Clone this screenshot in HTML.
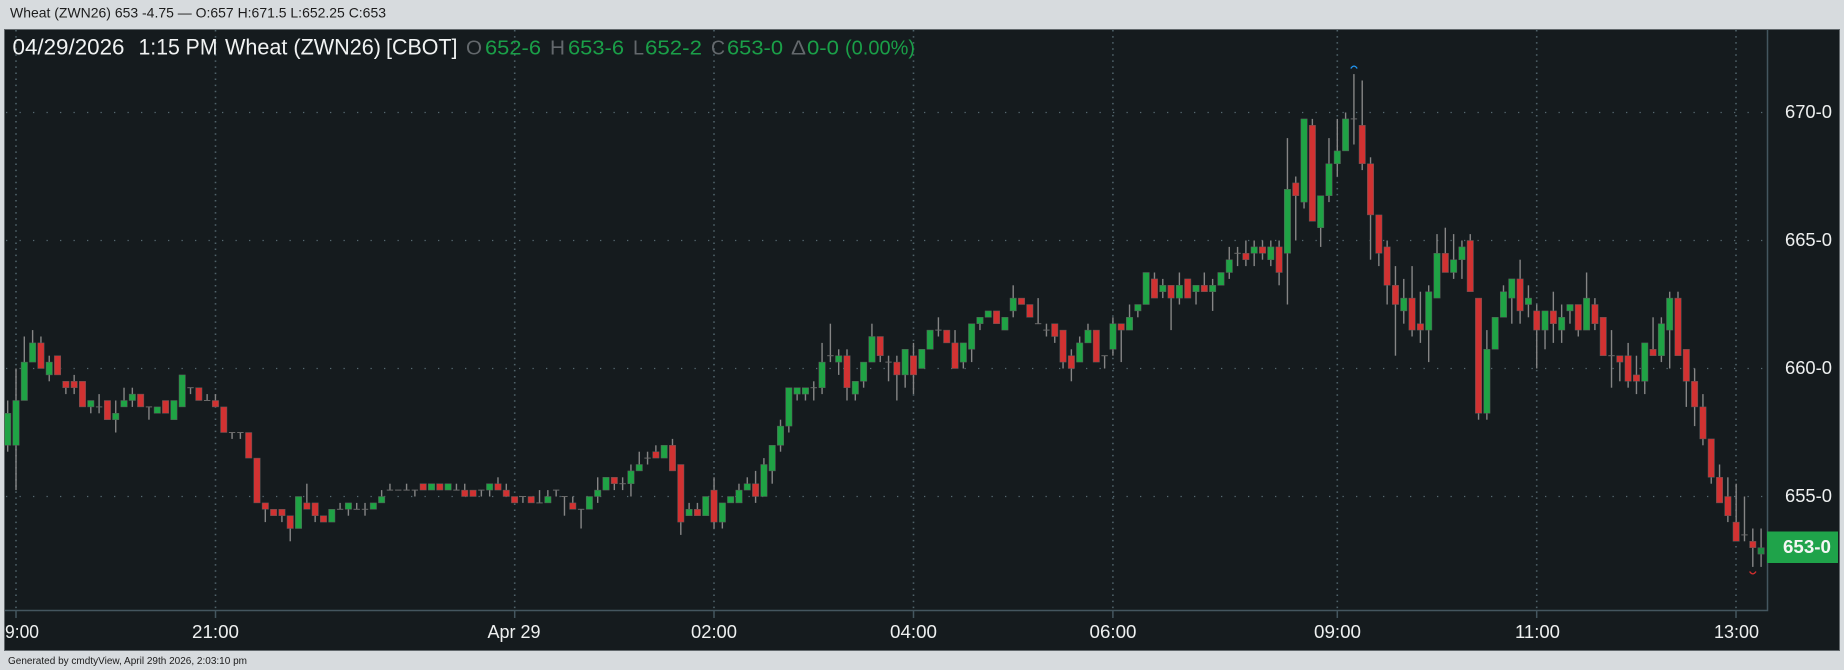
<!DOCTYPE html>
<html lang="en">
<head>
<meta charset="utf-8">
<title>Wheat (ZWN26)</title>
<style>
html,body{margin:0;padding:0;background:#d7dbde;width:1844px;height:670px;overflow:hidden}
svg{display:block}
text{font-family:"Liberation Sans",Arial,sans-serif}
.w{fill:#f1f3f3;font-size:22px}
.g{fill:#1a9f48;font-size:20.5px}
.k{fill:#63686c;font-size:20.5px}
.a{fill:#eef0f0;font-size:18px}
</style>
</head>
<body>
<svg id="c" xmlns="http://www.w3.org/2000/svg" width="1844" height="670" viewBox="0 0 1844 670">
<rect width="1844" height="670" fill="#d7dbde"/>
<text x="10" y="17.5" font-size="14" fill="#1c1c1c" textLength="376" lengthAdjust="spacingAndGlyphs">Wheat (ZWN26) 653 -4.75 — O:657 H:671.5 L:652.25 C:653</text>
<rect x="4.5" y="29.5" width="1835" height="621" fill="#151b1e" stroke="#62686c" stroke-width="1"/>
<g stroke="#566870" stroke-width="1.2" stroke-dasharray="1.3 12.2">
<line x1="6" x2="1763" y1="112.5" y2="112.5"/>
<line x1="6" x2="1763" y1="240.5" y2="240.5"/>
<line x1="6" x2="1763" y1="368.5" y2="368.5"/>
<line x1="6" x2="1763" y1="496.5" y2="496.5"/>
</g>
<g stroke="#4f6269" stroke-width="1.6" stroke-dasharray="1.5 4.57">
<line x1="16" x2="16" y1="30" y2="610"/>
<line x1="215.5" x2="215.5" y1="30" y2="610"/>
<line x1="514.7" x2="514.7" y1="30" y2="610"/>
<line x1="714" x2="714" y1="30" y2="610"/>
<line x1="913.5" x2="913.5" y1="30" y2="610"/>
<line x1="1112.9" x2="1112.9" y1="30" y2="610"/>
<line x1="1337.3" x2="1337.3" y1="30" y2="610"/>
<line x1="1536.7" x2="1536.7" y1="30" y2="610"/>
<line x1="1736" x2="1736" y1="30" y2="610"/>
</g>
<g id="candles"></g>
<g stroke="#44565f" stroke-width="1.5" fill="none">
<path d="M5 610.5H1767.5V30"/>
<path d="M16 611V618M215.5 611V618M514.7 611V618M714 611V618M913.5 611V618M1112.9 611V618M1337.3 611V618M1536.7 611V618M1736 611V618"/>
</g>
<path d="M1350.8 68.5Q1354 63.8 1357.2 68.5" fill="none" stroke="#2196f3" stroke-width="1.3"/>
<path d="M1749.6 571.5Q1752.8 576.2 1756 571.5" fill="none" stroke="#d32f2f" stroke-width="1.3"/>

<text class="w" x="12.5" y="54.5" textLength="112" lengthAdjust="spacingAndGlyphs">04/29/2026</text>
<text class="w" x="138.5" y="54.5" textLength="79" lengthAdjust="spacingAndGlyphs">1:15 PM</text>
<text class="w" x="225" y="54.5" textLength="156" lengthAdjust="spacingAndGlyphs">Wheat (ZWN26)</text>
<text class="w" x="386" y="54.5" textLength="71.5" lengthAdjust="spacingAndGlyphs">[CBOT]</text>
<text class="k" x="466" y="54.5" textLength="16" lengthAdjust="spacingAndGlyphs">O</text>
<text class="g" x="485" y="54.5" textLength="56" lengthAdjust="spacingAndGlyphs">652-6</text>
<text class="k" x="550" y="54.5" textLength="15" lengthAdjust="spacingAndGlyphs">H</text>
<text class="g" x="568" y="54.5" textLength="56" lengthAdjust="spacingAndGlyphs">653-6</text>
<text class="k" x="633" y="54.5" textLength="11" lengthAdjust="spacingAndGlyphs">L</text>
<text class="g" x="645" y="54.5" textLength="57" lengthAdjust="spacingAndGlyphs">652-2</text>
<text class="k" x="711" y="54.5" textLength="14" lengthAdjust="spacingAndGlyphs">C</text>
<text class="g" x="727" y="54.5" textLength="56" lengthAdjust="spacingAndGlyphs">653-0</text>
<text class="k" x="791" y="54.5" textLength="15" lengthAdjust="spacingAndGlyphs">Δ</text>
<text class="g" x="807" y="54.5" textLength="32" lengthAdjust="spacingAndGlyphs">0-0</text>
<text class="g" x="845" y="54.5" textLength="70" lengthAdjust="spacingAndGlyphs">(0.00%)</text>

<text class="a" x="1785" y="118" textLength="47" lengthAdjust="spacingAndGlyphs">670-0</text>
<text class="a" x="1785" y="246" textLength="47" lengthAdjust="spacingAndGlyphs">665-0</text>
<text class="a" x="1785" y="374" textLength="47" lengthAdjust="spacingAndGlyphs">660-0</text>
<text class="a" x="1785" y="502" textLength="47" lengthAdjust="spacingAndGlyphs">655-0</text>
<rect x="1767" y="531.5" width="71" height="31.5" fill="#1fa34a"/>
<text x="1783" y="553" font-size="18" font-weight="700" fill="#f4f6f4" textLength="48" lengthAdjust="spacingAndGlyphs">653-0</text>

<text class="a" x="5" y="638" textLength="34" lengthAdjust="spacingAndGlyphs">9:00</text>
<text class="a" x="192" y="638" textLength="47" lengthAdjust="spacingAndGlyphs">21:00</text>
<text class="a" x="487.5" y="638" textLength="53" lengthAdjust="spacingAndGlyphs">Apr 29</text>
<text class="a" x="691" y="638" textLength="46" lengthAdjust="spacingAndGlyphs">02:00</text>
<text class="a" x="890" y="638" textLength="47" lengthAdjust="spacingAndGlyphs">04:00</text>
<text class="a" x="1089.5" y="638" textLength="47" lengthAdjust="spacingAndGlyphs">06:00</text>
<text class="a" x="1314" y="638" textLength="47" lengthAdjust="spacingAndGlyphs">09:00</text>
<text class="a" x="1515" y="638" textLength="45" lengthAdjust="spacingAndGlyphs">11:00</text>
<text class="a" x="1714" y="638" textLength="45" lengthAdjust="spacingAndGlyphs">13:00</text>

<text x="8" y="664" font-size="10" fill="#1c1c1c" textLength="239" lengthAdjust="spacingAndGlyphs">Generated by cmdtyView, April 29th 2026, 2:03:10 pm</text>
</svg>
<script>
var D="g47,52,45,53 g45,52,40,59 g39,45,35,45 g36,39,34,39 r36,40,35,40 g39,41,38,42 r38,41,38,41 r42,43,42,44 r42,43,41,44 r42,46,42,46 g45,46,45,47 d46,46,44,47 r45,48,45,48 g47,48,45,50 g45,46,43,46 g44,45,43,46 r44,46,44,46 d46,46,46,48 g46,47,46,47 r45,47,45,47 g45,48,45,48 g41,46,41,46 d43,43,43,44 r43,45,43,45 d45,45,44,45 r45,46,44,46 r46,50,46,50 d50,50,50,51 d50,50,50,51 r50,54,50,54 r54,61,54,61 r61,62,61,64 r62,63,62,63 r62,63,62,64 r63,65,63,67 g60,65,60,65 r61,62,58,62 r61,63,61,64 r63,64,63,64 g62,64,62,64 d62,62,61,62 g61,62,61,63 d62,62,61,62 d62,62,61,63 g61,62,61,62 g60,61,59,61 d59,59,58,59 d59,59,59,59 d59,59,58,59 d59,59,59,60 r58,59,58,59 g58,59,58,59 r58,59,58,59 g58,59,58,59 d59,59,58,59 r59,60,58,60 r59,60,59,60 d59,59,59,60 g58,59,58,60 r58,59,57,59 r59,60,58,60 r60,61,60,61 d60,60,60,61 r60,61,60,61 d61,61,59,61 g60,61,59,61 d59,59,59,60 d60,60,60,63 r61,62,60,62 d62,62,62,65 g60,62,60,62 g59,60,57,61 g57,59,57,59 r57,58,57,59 d58,58,57,59 g56,58,55,60 g55,56,53,56 d54,54,53,55 r53,54,52,54 g52,54,52,54 r52,56,51,56 r55,64,55,66 g62,63,61,63 r62,63,61,63 g60,63,60,63 r59,64,57,65 g61,64,61,65 g60,61,60,61 g59,61,58,61 g58,59,57,59 r58,60,56,61 g55,60,54,60 g52,56,52,58 g49,52,48,53 g43,49,43,50 g43,44,43,45 g43,44,43,45 d43,43,42,45 g39,43,36,44 d38,38,33,39 g38,39,37,41 r38,43,37,45 g42,44,42,45 g39,42,39,43 g35,39,33,39 r35,38,35,39 d39,39,38,42 r39,41,38,45 g37,41,37,43 r38,41,36,44 g37,40,37,40 g34,37,34,37 d34,34,32,35 r34,36,34,36 r36,40,34,40 g36,39,36,40 g33,37,33,39 g32,33,32,34 g31,32,31,32 r31,33,31,33 g32,34,32,34 g29,31,27,32 r29,30,29,30 r30,32,30,32 d33,33,29,33 d34,34,33,35 r33,35,33,36 r34,39,34,40 r38,40,37,42 g36,39,35,39 g34,36,33,36 r34,39,34,39 d38,38,38,40 g33,37,32,38 r33,34,33,39 g32,34,30,34 g30,31,30,32 g25,30,25,30 r26,29,25,29 g27,28,26,29 r27,29,27,34 g27,29,25,30 r26,29,26,29 g27,28,27,30 r27,28,25,28 g27,28,26,31 g25,27,25,27 g23,25,21,26 d22,22,21,24 r22,23,20,24 g21,22,20,24 r21,22,20,23 g21,23,20,24 r21,25,20,27 g12,22,4,30 r11,13,10,20 g1,14,1,15 r2,17,1,17 g13,18,13,21 g8,13,4,14 g6,8,1,10 g1,6,0,6 d1,1,-6,5 r2,8,-5,9 r8,16,7,23 r16,22,16,24 r21,27,20,30 r27,30,24,38 g29,31,26,33 r29,34,24,35 r33,34,28,36 g28,34,27,39 g22,29,19,29 r22,25,18,25 g23,25,19,26 g21,23,20,26 r20,28,19,28 r29,47,29,48 g37,47,34,48 g32,37,32,37 g28,32,27,32 g26,29,26,33 r26,31,23,33 g29,30,27,32 r31,34,30,40 g31,34,31,37 r31,33,28,36 g32,34,30,36 g30,31,30,33 r30,34,30,35 g29,34,25,34 r30,33,29,34 r32,38,32,38 d38,38,34,43 r38,39,38,42 r38,42,36,43 r41,42,38,44 g36,42,36,44 r37,38,32,38 g33,38,32,39 g29,34,28,40 r29,38,28,38 r37,42,37,46 r42,46,40,49 r46,51,44,52 r51,57,51,58 r57,61,55,61 r60,63,57,64 r64,67,58,67 d66,66,60,67 r67,68,65,71 n68,69,65,71".split(" ");
var s="";
function Y(t){return (112.5+6.4*t).toFixed(1)}
D.forEach(function(v,i){
  var k=v.charAt(0),p=v.slice(1).split(",").map(Number),x=7.69+8.31*i;
  var X=x.toFixed(2);
  if(p[2]<p[0]) s+='<line x1="'+X+'" x2="'+X+'" y1="'+Y(p[2])+'" y2="'+Y(p[0])+'" stroke="#858585" stroke-width="1.4"/>';
  if(p[3]>p[1]) s+='<line x1="'+X+'" x2="'+X+'" y1="'+Y(p[1])+'" y2="'+Y(p[3])+'" stroke="#858585" stroke-width="1.4"/>';
  if(k==="d"){
    s+='<line x1="'+(x-3.2).toFixed(2)+'" x2="'+(x+3.2).toFixed(2)+'" y1="'+Y(p[0])+'" y2="'+Y(p[0])+'" stroke="#6a6a6a" stroke-width="1"/>';
  }else{
    var f=k==="g"?"#1fa345":k==="r"?"#d13232":"#1e8a40";
    s+='<rect x="'+(x-3.2).toFixed(2)+'" y="'+Y(p[0])+'" width="6.4" height="'+(6.4*(p[1]-p[0])).toFixed(1)+'" fill="'+f+'" stroke="#5a5a5a" stroke-width="0.5"/>';
  }
});
document.getElementById("candles").innerHTML=s;
</script>
</body>
</html>
